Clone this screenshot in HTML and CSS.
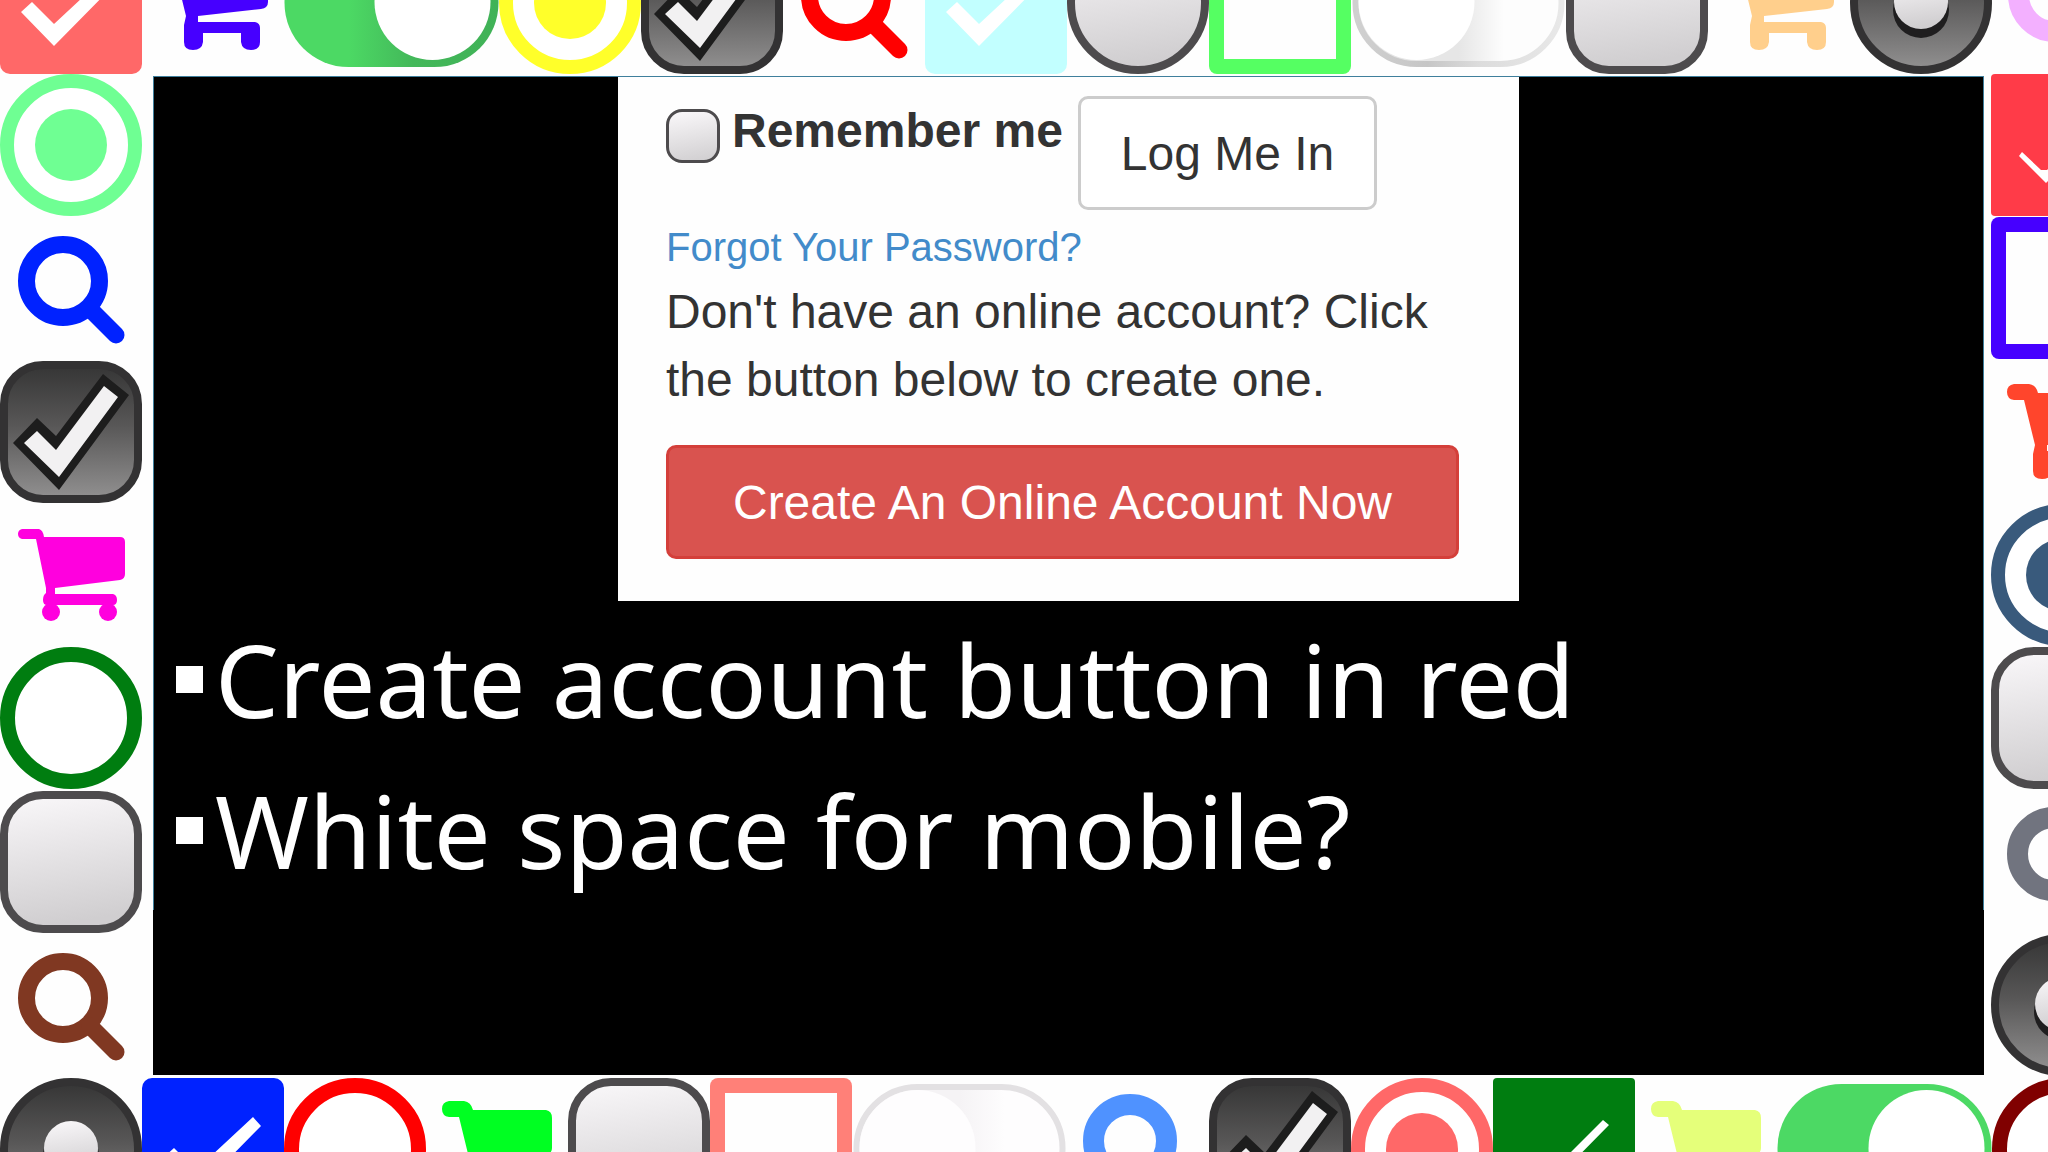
FILE: index.html
```html
<!DOCTYPE html>
<html lang="en">
<head>
  <meta charset="UTF-8">
  <meta name="viewport" content="width=device-width, initial-scale=1">
  <title>Create account button</title>
  <link rel="stylesheet" href="styles.css">
</head>
<body>

  <!-- shared icon shapes -->
  <svg class="defs" aria-hidden="true">
    <defs>
      <linearGradient id="dark" x1="0" y1="0" x2="0" y2="1">
        <stop offset="0" stop-color="#353535"/>
        <stop offset="0.45" stop-color="#585757"/>
        <stop offset="1" stop-color="#929191"/>
      </linearGradient>
      <linearGradient id="light" x1="0" y1="0" x2="0.15" y2="1">
        <stop offset="0" stop-color="#faf8fa"/>
        <stop offset="1" stop-color="#d0ced0"/>
      </linearGradient>
      <linearGradient id="shade-on" x1="0" y1="0" x2="1" y2="0">
        <stop offset="0.3" stop-color="#4cd964"/>
        <stop offset="0.6" stop-color="#43b85a"/>
        <stop offset="1" stop-color="#40b257"/>
      </linearGradient>
      <linearGradient id="shade-off" x1="0" y1="0" x2="1" y2="0">
        <stop offset="0.5" stop-color="#e6e6e6"/>
        <stop offset="0.72" stop-color="#fdfdfd"/>
      </linearGradient>
      <linearGradient id="shade-off-flat" x1="0" y1="0" x2="1" y2="0">
        <stop offset="0.5" stop-color="#f5f3f5"/>
        <stop offset="0.72" stop-color="#fefdfe"/>
      </linearGradient>
      <linearGradient id="rim-off" x1="0" y1="0" x2="1" y2="0">
        <stop offset="0" stop-color="#d0d0d0"/>
        <stop offset="0.35" stop-color="#c6c6c6"/>
        <stop offset="0.6" stop-color="#dcdcdc"/>
        <stop offset="1" stop-color="#e8e8e8"/>
      </linearGradient>
      <symbol id="check" viewBox="0 0 142 142">
        <rect width="142" height="142" rx="10" fill="currentColor"/>
        <path d="M21 80 32 70 54 92 111 39 119 48 54 114Z" fill="#fff"/>
      </symbol>
      <symbol id="check-thin" viewBox="0 0 142 142">
        <rect width="142" height="142" rx="4" fill="currentColor"/>
        <path d="M28 82 31 78 50 96H56L110 42 116 47 55 109Z" fill="#fff"/>
      </symbol>
      <symbol id="square" viewBox="0 0 142 142">
        <rect width="142" height="142" rx="8" fill="currentColor"/>
        <rect x="15" y="15" width="112" height="112" fill="#fefefe"/>
      </symbol>
      <symbol id="radio" viewBox="0 0 142 142">
        <circle cx="71" cy="71" r="64" fill="#fff" stroke="currentColor" stroke-width="14"/>
        <circle cx="71" cy="71" r="36" fill="currentColor"/>
      </symbol>
      <symbol id="ring" viewBox="0 0 142 142">
        <circle cx="71" cy="71" r="63.5" fill="#fff" stroke="currentColor" stroke-width="15"/>
      </symbol>
      <symbol id="search" viewBox="0 0 142 142">
        <circle cx="63" cy="64" r="36.5" fill="none" stroke="currentColor" stroke-width="17"/>
        <path d="M90 92 116 118" stroke="currentColor" stroke-width="17" stroke-linecap="round"/>
      </symbol>
      <symbol id="search-bold" viewBox="0 0 142 142">
        <circle cx="63" cy="63" r="36.5" fill="none" stroke="currentColor" stroke-width="21"/>
        <path d="M90 91 115 117" stroke="currentColor" stroke-width="21" stroke-linecap="round"/>
      </symbol>
      <symbol id="cart" viewBox="0 0 142 142">
        <path fill="currentColor" d="M22 25H39Q43 26 44 33H120Q125 33 125 38V70Q125 75 120 76L55 84V90H113Q117 91 117 96T113 101H47Q43 101 43 96T46 89V84L36 35H22Q18 34 18 30T22 25Z"/>
        <circle cx="51" cy="108" r="9" fill="currentColor"/>
        <circle cx="108" cy="108" r="9" fill="currentColor"/>
      </symbol>
      <symbol id="cart-wide" viewBox="0 0 142 142">
        <path fill="currentColor" d="M23 23H38Q45 24 47 32H120Q126 33 126 40V70Q126 76 119 77L56 84V90H113Q118 91 118 96V110Q118 118 109 118T99 110V101H61V110Q60 118 51 118T42 110V93L44 84 33 39H23Q16 38 16 31T23 23Z"/>
      </symbol>
      <symbol id="box" viewBox="0 0 142 142">
        <rect x="4" y="4" width="134" height="134" rx="39" fill="url(#light)" stroke="#4d4b4d" stroke-width="8"/>
      </symbol>
      <symbol id="disc" viewBox="0 0 142 142">
        <circle cx="71" cy="71" r="67" fill="url(#light)" stroke="#4d4b4d" stroke-width="8"/>
      </symbol>
      <symbol id="box-dark" viewBox="0 0 142 142">
        <rect x="4" y="4" width="134" height="134" rx="39" fill="url(#dark)" stroke="#333233" stroke-width="8"/>
        <path d="M13 82 37 57 56 75 103 13 129 34 59 129Z" fill="#1d1d1d"/>
        <path d="M24 82 37 70 56 89 104 25 118 36 59 116Z" fill="#f2f1f2"/>
      </symbol>
      <symbol id="disc-dark" viewBox="0 0 142 142">
        <circle cx="71" cy="71" r="67" fill="url(#dark)" stroke="#333233" stroke-width="8"/>
        <circle cx="71" cy="78" r="28" fill="#1f1e1f"/>
        <circle cx="71" cy="70" r="27" fill="url(#light)"/>
      </symbol>
      <symbol id="toggle-on" viewBox="0 0 214 142">
        <rect y="7" width="214" height="128" rx="64" fill="url(#shade-on)"/>
        <circle cx="148" cy="70" r="58" fill="#fff"/>
      </symbol>
      <symbol id="toggle-on-flat" viewBox="0 0 214 142">
        <rect y="6" width="214" height="128" rx="64" fill="#4cd964"/>
        <circle cx="149" cy="70" r="58" fill="#fff"/>
      </symbol>
      <symbol id="toggle-off" viewBox="0 0 214 142">
        <rect x="4" y="10" width="206" height="122" rx="61" fill="url(#shade-off)" stroke="url(#rim-off)" stroke-width="6"/>
        <circle cx="65" cy="70" r="58" fill="#fff"/>
      </symbol>
      <symbol id="toggle-off-flat" viewBox="0 0 214 142">
        <rect x="4" y="9" width="206" height="122" rx="61" fill="url(#shade-off-flat)" stroke="#e3e1e3" stroke-width="6"/>
        <circle cx="65" cy="70" r="58" fill="#fefdfe"/>
      </symbol>
    </defs>
  </svg>

  <div class="page">
    <div class="band band-top" aria-hidden="true">
      <svg class="tile coral"><use href="#check"/></svg>
      <svg class="tile violet"><use href="#cart-wide"/></svg>
      <svg class="tile tile-wide"><use href="#toggle-on"/></svg>
      <svg class="tile yellow"><use href="#radio"/></svg>
      <svg class="tile"><use href="#box-dark"/></svg>
      <svg class="tile red"><use href="#search"/></svg>
      <svg class="tile ice"><use href="#check"/></svg>
      <svg class="tile"><use href="#disc"/></svg>
      <svg class="tile lime"><use href="#square"/></svg>
      <svg class="tile tile-wide"><use href="#toggle-off"/></svg>
      <svg class="tile"><use href="#box"/></svg>
      <svg class="tile peach"><use href="#cart-wide"/></svg>
      <svg class="tile"><use href="#disc-dark"/></svg>
      <svg class="tile pink"><use href="#search-bold"/></svg>
    </div>

    <div class="side" aria-hidden="true">
      <svg class="tile mint"><use href="#radio"/></svg>
      <svg class="tile blue"><use href="#search"/></svg>
      <svg class="tile"><use href="#box-dark"/></svg>
      <svg class="tile magenta"><use href="#cart"/></svg>
      <svg class="tile green"><use href="#ring"/></svg>
      <svg class="tile"><use href="#box"/></svg>
      <svg class="tile brown"><use href="#search"/></svg>
    </div>

    <main class="slide">
      <div class="frame">
        <form class="card">
          <div class="login-row">
            <div class="remember">
              <input type="checkbox" id="remember">
              <label for="remember">Remember me</label>
            </div>
            <button type="button" class="btn">Log Me In</button>
          </div>
          <a class="forgot" href="#">Forgot Your Password?</a>
          <p>Don't have an online account? Click the button below to create one.</p>
          <button type="button" class="btn btn-danger">Create An Online Account Now</button>
        </form>
        <ul class="notes">
          <li>Create account button in red</li>
          <li>White space for mobile?</li>
        </ul>
      </div>
    </main>

    <div class="side" aria-hidden="true">
      <svg class="tile scarlet"><use href="#check-thin"/></svg>
      <svg class="tile violet"><use href="#square"/></svg>
      <svg class="tile orange"><use href="#cart-wide"/></svg>
      <svg class="tile slate"><use href="#radio"/></svg>
      <svg class="tile"><use href="#box"/></svg>
      <svg class="tile gray"><use href="#search-bold"/></svg>
      <svg class="tile"><use href="#disc-dark"/></svg>
    </div>

    <div class="band" aria-hidden="true">
      <svg class="tile"><use href="#disc-dark"/></svg>
      <svg class="tile blue"><use href="#check"/></svg>
      <svg class="tile red"><use href="#ring"/></svg>
      <svg class="tile neon"><use href="#cart-wide"/></svg>
      <svg class="tile"><use href="#box"/></svg>
      <svg class="tile salmon"><use href="#square"/></svg>
      <svg class="tile tile-wide"><use href="#toggle-off-flat"/></svg>
      <svg class="tile sky"><use href="#search-bold"/></svg>
      <svg class="tile"><use href="#box-dark"/></svg>
      <svg class="tile coral"><use href="#radio"/></svg>
      <svg class="tile green"><use href="#check-thin"/></svg>
      <svg class="tile lemon"><use href="#cart-wide"/></svg>
      <svg class="tile tile-wide"><use href="#toggle-on-flat"/></svg>
      <svg class="tile maroon"><use href="#ring"/></svg>
    </div>
  </div>

</body>
</html>
```
FILE: styles.css
```css
* {
  box-sizing: border-box;
}
body {
  margin: 0;
  background: #fefefe;
  color: #333;
  font-family: "Liberation Sans", Arial, sans-serif;
  font-size: 48px;
}
.defs {
  position: absolute;
  width: 0;
  height: 0;
}
.page {
  display: grid;
  grid-template-columns: 142px minmax(0, 1fr) 57px;
  grid-template-rows: 74px 1fr 74px;
  height: 100vh;
  overflow: hidden;
}

/* icon border */
.band {
  grid-column: 1 / -1;
  display: flex;
  align-items: flex-start;
  overflow: hidden;
}
.band-top {
  align-items: flex-end;
}
.side {
  display: flex;
  flex-direction: column;
  justify-content: space-between;
  padding-bottom: 2px;
  overflow: hidden;
}
.tile {
  flex: none;
  width: 142px;
  height: 142px;
}
.tile-wide {
  width: 215px;
}
.coral { color: #ff6868; }
.violet { color: #4600ff; }
.yellow { color: #ffff2a; }
.red { color: #ff0000; }
.ice { color: #c2ffff; }
.lime { color: #55ff62; }
.peach { color: #ffcf8c; }
.pink { color: #f3b0ff; }
.mint { color: #6fff93; }
.blue { color: #0022ff; }
.magenta { color: #ff00de; }
.green { color: #007d10; }
.brown { color: #803822; }
.scarlet { color: #ff3b48; }
.orange { color: #ff452c; }
.slate { color: #395a7c; }
.gray { color: #71747f; }
.neon { color: #00ff22; }
.salmon { color: #ff8078; }
.sky { color: #4f92ff; }
.lemon { color: #e5ff7a; }
.maroon { color: #800000; }

/* slide */
.slide {
  margin: 2px 7px 3px 11px;
  background: #000;
}
.frame {
  border: 1px solid #3f7f9c;
  border-bottom: 0;
  height: 834px;
}
.card {
  width: 901px;
  max-width: 100%;
  margin: 0 auto;
  padding: 19px 60px 42px 48px;
  background: #fefefe;
}
.login-row {
  display: flex;
  align-items: flex-start;
  gap: 15px;
}
.remember {
  display: flex;
  gap: 12px;
  padding-top: 8px;
  font-weight: bold;
  line-height: 54px;
}
.remember input {
  appearance: none;
  width: 54px;
  height: 54px;
  margin: 5px 0 0;
  border: 3px solid #4d4b4d;
  border-radius: 16px;
  background: linear-gradient(170deg, #faf8fa, #d0ced0);
}
.btn {
  height: 114px;
  padding: 0 40px;
  border: 3px solid #ccc;
  border-radius: 10px;
  background: #fff;
  color: #333;
  font: inherit;
}
.btn-danger {
  display: block;
  width: 100%;
  border-color: #d43f3a;
  background: #d9534f;
  color: #fff;
}
.forgot {
  display: block;
  margin-top: 6px;
  color: #428bca;
  font-size: 40px;
  line-height: 62px;
  text-decoration: none;
}
.card p {
  margin: 0 0 31px;
  line-height: 68px;
}
.notes {
  margin: 0;
  padding: 3px 0 0 22px;
  list-style: none;
  color: #fff;
  font-family: "Noto Sans", "Open Sans", sans-serif;
  font-size: 101px;
  line-height: 151px;
}
.notes li {
  display: flex;
  align-items: center;
  gap: 12px;
}
.notes li::before {
  content: "";
  width: 27px;
  height: 27px;
  background: #fff;
}
```
